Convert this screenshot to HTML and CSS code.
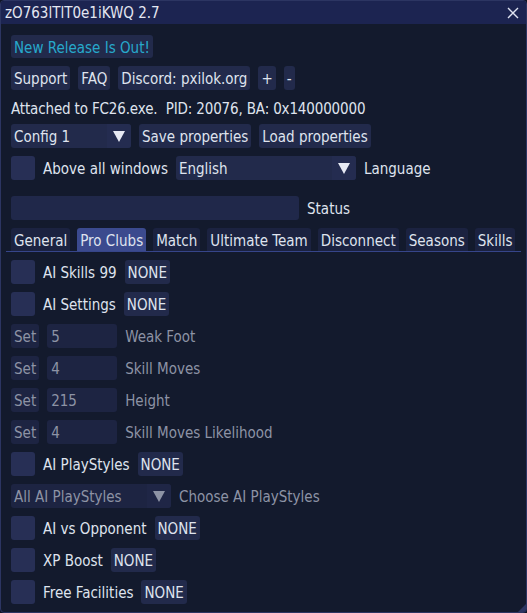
FILE: index.html
```html
<!DOCTYPE html>
<html>
<head>
<meta charset="utf-8">
<link rel="stylesheet" href="styles.css">
</head>
<body>
<div class="window">
  <div class="titlebar">
    <span class="title">zO763lTlT0e1iKWQ 2.7</span>
    <svg class="close" width="12" height="12" viewBox="0 0 12 12"><path d="M1 1L11 11M11 1L1 11" stroke="#dfe3f0" stroke-width="1.4"/></svg>
  </div>
  <div class="content">
    <div class="row r-first"><div class="btn link">New Release Is Out!</div></div>
    <div class="row">
      <div class="btn">Support</div>
      <div class="btn">FAQ</div>
      <div class="btn">Discord: pxilok.org</div>
      <div class="btn">+</div>
      <div class="btn">-</div>
    </div>
    <div class="textline">Attached to FC26.exe.&nbsp; PID: 20076, BA: 0x140000000</div>
    <div class="row">
      <div class="combo w-config"><span class="combo-val">Config 1</span><span class="arrow"><span class="tri"></span></span></div>
      <div class="btn">Save properties</div>
      <div class="btn">Load properties</div>
    </div>
    <div class="row">
      <div class="check"></div>
      <span class="label">Above all windows</span>
      <div class="combo w-lang"><span class="combo-val">English</span><span class="arrow"><span class="tri"></span></span></div>
      <span class="label">Language</span>
    </div>
    <div class="row r-status">
      <div class="input w-status"></div>
      <span class="label">Status</span>
    </div>
    <div class="tabbar">
      <div class="tab">General</div>
      <div class="tab active">Pro Clubs</div>
      <div class="tab">Match</div>
      <div class="tab">Ultimate Team</div>
      <div class="tab">Disconnect</div>
      <div class="tab">Seasons</div>
      <div class="tab">Skills</div>
    </div>
    <div class="row"><div class="check"></div><span class="label">AI Skills 99</span><div class="btn">NONE</div></div>
    <div class="row"><div class="check"></div><span class="label">AI Settings</span><div class="btn">NONE</div></div>
    <div class="row dis"><div class="btn">Set</div><div class="input w-num">5</div><span class="label">Weak Foot</span></div>
    <div class="row dis"><div class="btn">Set</div><div class="input w-num">4</div><span class="label">Skill Moves</span></div>
    <div class="row dis"><div class="btn">Set</div><div class="input w-num">215</div><span class="label">Height</span></div>
    <div class="row dis"><div class="btn">Set</div><div class="input w-num">4</div><span class="label">Skill Moves Likelihood</span></div>
    <div class="row"><div class="check"></div><span class="label">AI PlayStyles</span><div class="btn">NONE</div></div>
    <div class="row dis"><div class="combo w-play"><span class="combo-val">All AI PlayStyles</span><span class="arrow"><span class="tri"></span></span></div><span class="label">Choose AI PlayStyles</span></div>
    <div class="row"><div class="check"></div><span class="label">AI vs Opponent</span><div class="btn">NONE</div></div>
    <div class="row"><div class="check"></div><span class="label">XP Boost</span><div class="btn">NONE</div></div>
    <div class="row"><div class="check"></div><span class="label">Free Facilities</span><div class="btn">NONE</div></div>
  </div>
  <div class="grip"></div>
</div>
</body>
</html>
```
FILE: styles.css
```css
* { box-sizing: border-box; }
html, body { margin: 0; padding: 0; }
body {
  background: #0f1525;
  width: 527px;
  height: 613px;
  overflow: hidden;
  font-family: "DejaVu Sans Condensed", "DejaVu Sans", sans-serif;
  font-stretch: semi-condensed;
  font-size: 15px;
  color: #dfe3ee;
}
.window {
  position: relative;
  width: 527px;
  height: 613px;
  background: #131a2d;
  border: 1px solid #2c3562;
  border-radius: 4px;
  overflow: hidden;
}
.titlebar {
  height: 23px;
  background: #1c2451;
  display: flex;
  align-items: center;
  justify-content: space-between;
  padding: 2px 7px 0 4px;
}
.title { color: #e4e7f2; line-height: 21px; }
.close { display: block; margin-top: -2px; }
.content {
  display: flex;
  flex-direction: column;
  gap: 8px;
  padding: 11px 10px 0 10px;
}
.row {
  display: flex;
  align-items: center;
  gap: 8px;
  height: 24px;
}
.r-first { height: 23px; }
.r-status { margin-top: 8px; }
.btn {
  height: 100%;
  display: flex;
  align-items: center;
  padding: 2px 3px 0 3px;
  background: #222a4b;
  border-radius: 3px;
  white-space: nowrap;
}
.link { color: #27a9cb; }
.textline {
  height: 18px;
  line-height: 18px;
  padding-top: 2px;
  white-space: nowrap;
  letter-spacing: -0.15px;
}
.label { white-space: nowrap; padding-top: 2px; }
.check {
  width: 24px;
  height: 24px;
  background: #272f55;
  border-radius: 3px;
  flex: none;
}
.combo {
  height: 24px;
  display: flex;
  align-items: center;
  justify-content: space-between;
  background: #222a4b;
  border-radius: 3px;
  padding-left: 3px;
  flex: none;
}
.combo-val { white-space: nowrap; padding-top: 2px; }
.arrow {
  width: 24px;
  height: 24px;
  display: flex;
  align-items: center;
  justify-content: center;
  background: #242c50;
  border-radius: 0 3px 3px 0;
}
.tri {
  width: 0;
  height: 0;
  border-left: 6px solid transparent;
  border-right: 6px solid transparent;
  border-top: 11px solid #e6e9f3;
}
.w-config { width: 120px; }
.w-lang { width: 180px; }
.w-play { width: 160px; }
.input {
  height: 24px;
  background: #20284a;
  border-radius: 3px;
  display: flex;
  align-items: center;
  padding: 2px 0 0 4px;
  flex: none;
}
.w-status { width: 288px; }
.w-num { width: 70px; }
.tabbar {
  display: flex;
  gap: 7px;
  height: 24px;
  margin: 0 -5px;
  padding: 0 5px;
  border-bottom: 1px solid #36458a;
  align-items: flex-end;
}
.tab {
  height: 23px;
  display: flex;
  align-items: center;
  padding: 2px 3px 0 3px;
  background: #1b2240;
  border-radius: 3px 3px 0 0;
  white-space: nowrap;
}
.tab.active { background: #3b4a8e; }
.dis { color: #8d93a5; }
.dis .btn { background: #1d2442; }
.dis .input { background: #1d2442; }
.dis .combo { background: #1d2442; }
.dis .arrow { background: #1f2646; }
.dis .tri { border-top-color: #8d93a5; }
.grip {
  position: absolute;
  right: 0;
  bottom: 0;
  width: 0;
  height: 0;
  border-left: 8px solid transparent;
  border-bottom: 8px solid #2c3562;
}
```
